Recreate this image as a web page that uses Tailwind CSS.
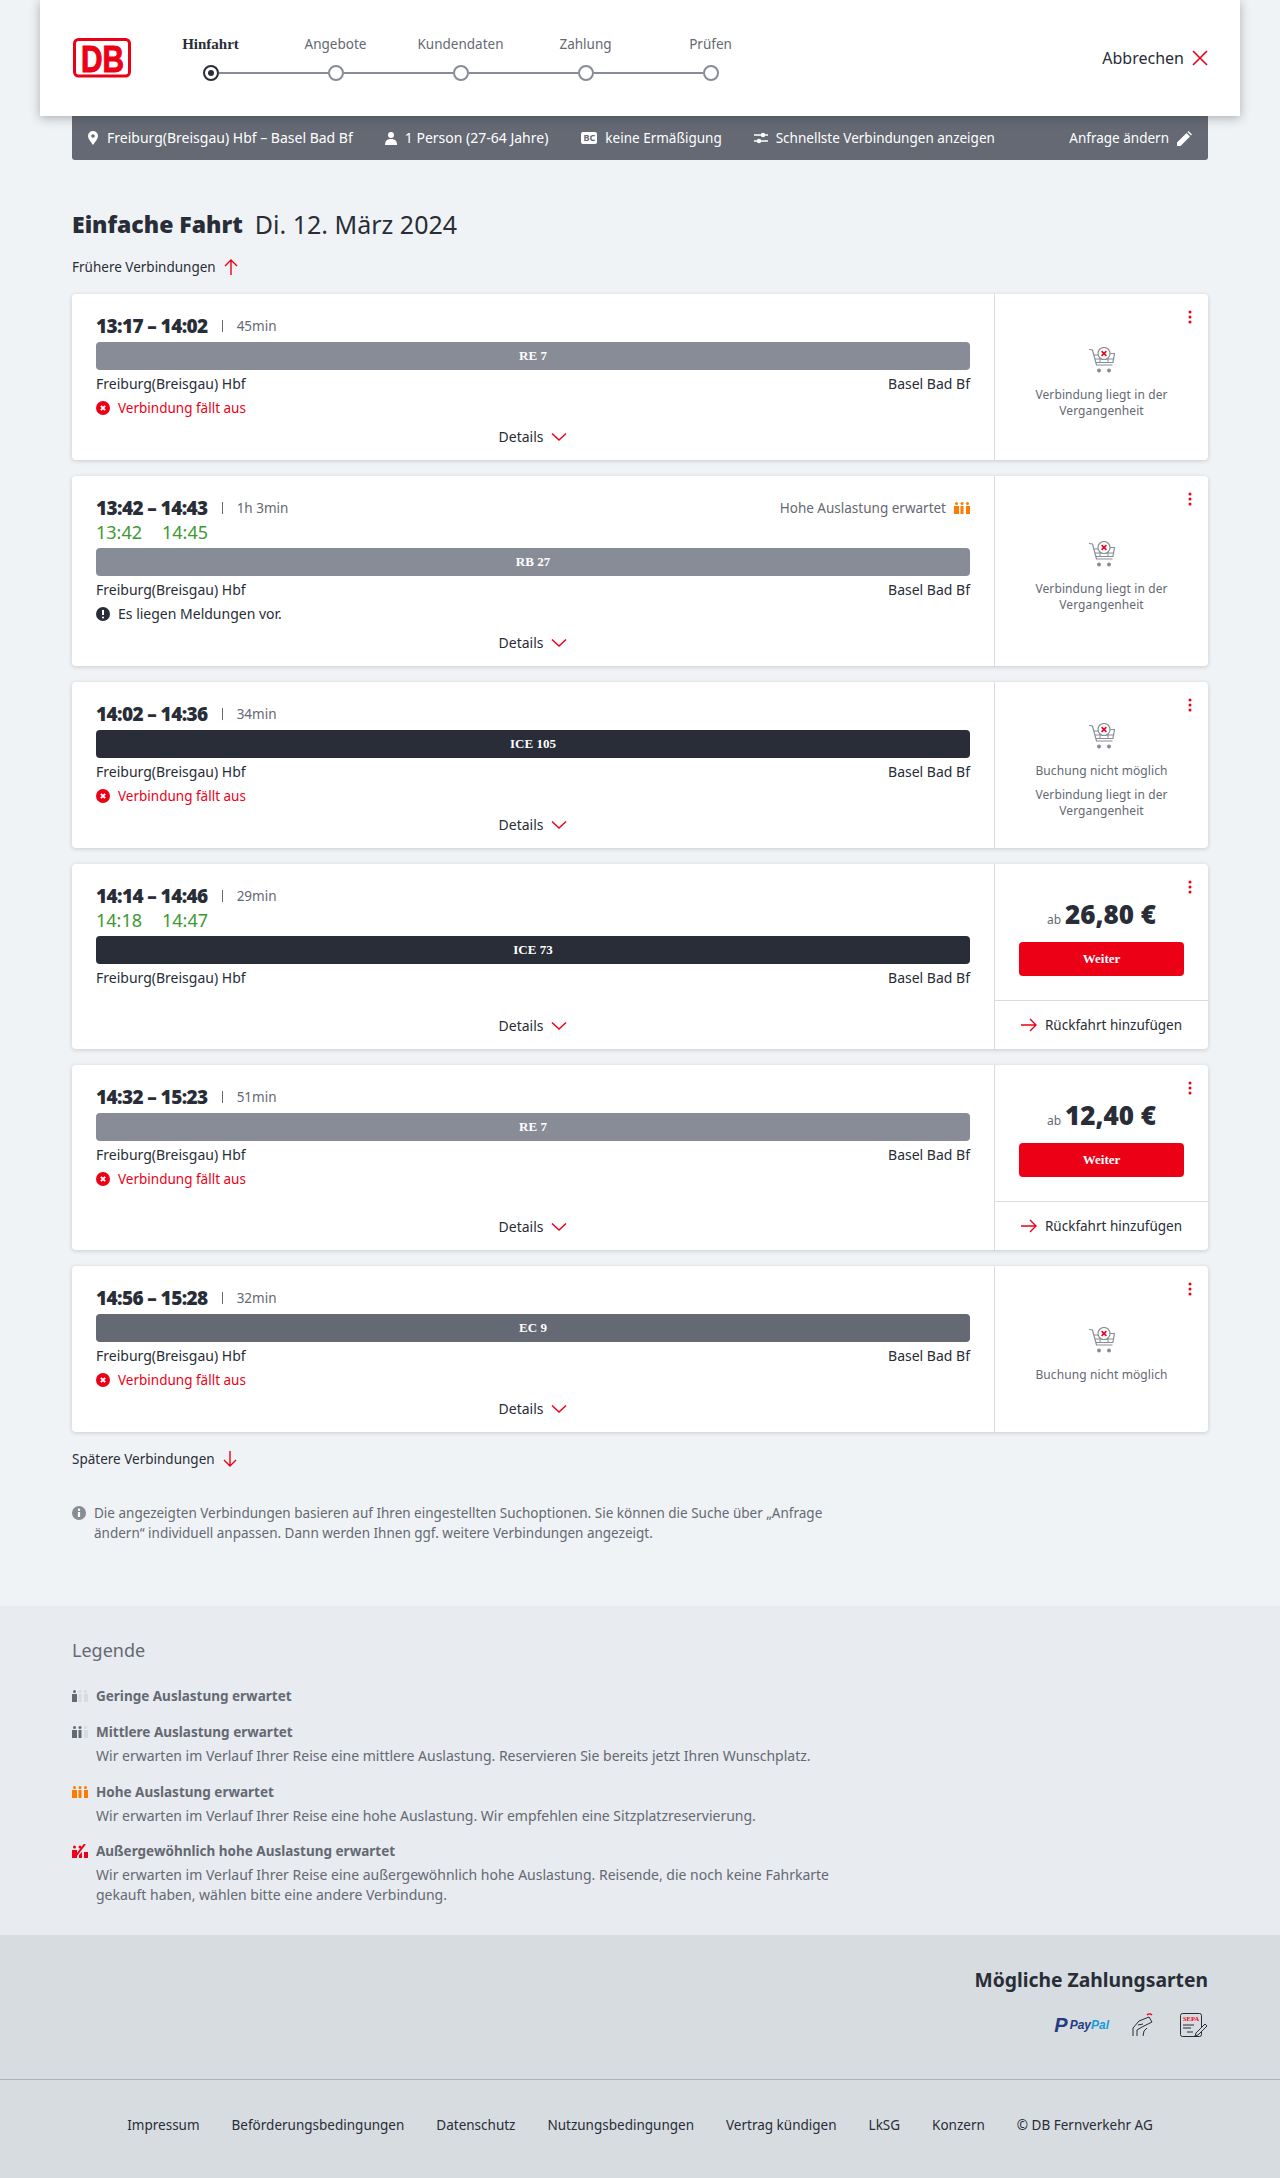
<!DOCTYPE html>
<html lang="de">
<head>
    <meta charset="UTF-8">
    <meta name="viewport" content="width=device-width, initial-scale=1.0">
    <title>Verbindungen</title>
    <script src="https://cdn.jsdelivr.net/npm/@tailwindcss/browser@4"></script>
</head>
<body class="bg-[#f0f3f5] font-['Noto_Sans',sans-serif] text-[#282d37] text-[14px] leading-5">

    <svg class="hidden" xmlns="http://www.w3.org/2000/svg">
        <symbol id="cart" viewBox="0 0 26 26">
            <path d="M0 2.500l3.500.5L7.500 18h16" fill="none" stroke="#878c96" stroke-width="1.200"/>
            <path d="M5 8h4M21 6.500h4.500l-1.600 9H7" fill="none" stroke="#878c96" stroke-width="1.200"/>
            <path d="M6 12h18M11 9v6M19 11v4" fill="none" stroke="#878c96" stroke-width="1"/>
            <circle cx="15" cy="6.500" r="6" fill="#fff" stroke="#878c96" stroke-width="1.200"/>
            <path d="M12.600 4.100l4.800 4.800M17.400 4.100l-4.800 4.800" stroke="#ec0016" stroke-width="1.500"/>
            <circle cx="10" cy="23.500" r="2" fill="#878c96"/>
            <circle cx="20" cy="23.500" r="2" fill="#878c96"/>
        </symbol>
        <symbol id="dots" viewBox="0 0 4 14">
            <circle cx="2" cy="2" r="1.500" fill="#ec0016"/>
            <circle cx="2" cy="7" r="1.500" fill="#ec0016"/>
            <circle cx="2" cy="12" r="1.500" fill="#ec0016"/>
        </symbol>
        <symbol id="chev" viewBox="0 0 16 10">
            <path d="M1 1.500l7 6.500 7-6.500" fill="none" stroke="#ec0016" stroke-width="1.500"/>
        </symbol>
        <symbol id="right" viewBox="0 0 16 14">
            <path d="M0 7h15M9 1l6 6-6 6" fill="none" stroke="#ec0016" stroke-width="1.400"/>
        </symbol>
        <symbol id="err" viewBox="0 0 14 14">
            <circle cx="7" cy="7" r="7" fill="#ec0016"/>
            <path d="M4.900 4.900l4.200 4.200M9.100 4.900l-4.200 4.200" stroke="#fff" stroke-width="2"/>
        </symbol>
    </svg>

    <header class="mx-10 h-[116px] bg-white shadow-[0_2px_10px_rgba(40,45,55,0.35)] relative z-10 flex items-center pl-[33px] pr-8">
        <svg class="w-[58px] h-10 shrink-0 overflow-visible" viewBox="0 0 58 40">
            <rect x="1.500" y="1.500" width="55" height="36.500" rx="4" fill="#fff" stroke="#ec0016" stroke-width="3"/>
            <text x="8" y="33.500" textLength="43" lengthAdjust="spacingAndGlyphs" font-family="Liberation Sans" font-weight="700" font-size="37" fill="#ec0016" stroke="#ec0016" stroke-width="1">DB</text>
        </svg>
        <div class="ml-[17px] w-[625px] -mt-px">
            <div class="grid grid-cols-5 text-center text-[13.500px] text-[#646973] h-5">
                <span class="font-['Liberation_Serif',serif] font-bold text-[15px] text-[#282d37]">Hinfahrt</span>
                <span>Angebote</span>
                <span>Kundendaten</span>
                <span>Zahlung</span>
                <span>Prüfen</span>
            </div>
            <div class="flex items-center mt-[11px] mx-[54.500px]">
                <span class="w-4 h-4 rounded-full border-2 border-[#282d37] flex items-center justify-center shrink-0"><span class="w-1.5 h-1.5 rounded-full bg-[#282d37]"></span></span>
                <span class="flex-1 h-0.5 bg-[#878c96]"></span>
                <span class="w-4 h-4 rounded-full border-2 border-[#878c96] shrink-0"></span>
                <span class="flex-1 h-0.5 bg-[#878c96]"></span>
                <span class="w-4 h-4 rounded-full border-2 border-[#878c96] shrink-0"></span>
                <span class="flex-1 h-0.5 bg-[#878c96]"></span>
                <span class="w-4 h-4 rounded-full border-2 border-[#878c96] shrink-0"></span>
                <span class="flex-1 h-0.5 bg-[#878c96]"></span>
                <span class="w-4 h-4 rounded-full border-2 border-[#878c96] shrink-0"></span>
            </div>
        </div>
        <div class="ml-auto flex items-center gap-2 text-[16px]">
            <span>Abbrechen</span>
            <svg class="w-4 h-4" viewBox="0 0 16 16"><path d="M1 1l14 14M15 1L1 15" stroke="#ec0016" stroke-width="1.600"/></svg>
        </div>
    </header>

    <div class="mx-[72px] h-11 bg-[#646973] rounded-b-[3px] text-white flex items-center pl-4 pr-4 text-[13.500px]">
        <svg class="w-[10px] h-[14px] mr-[9px]" viewBox="0 0 10 14"><path fill-rule="evenodd" d="M5 0a5 5 0 0 1 5 5c0 3-3 6-5 9-2-3-5-6-5-9a5 5 0 0 1 5-5zm0 3.200a1.800 1.800 0 1 0 0 3.600 1.800 1.800 0 0 0 0-3.600z" fill="#fff"/></svg>
        <span class="text-[14px]">Freiburg(Breisgau) Hbf – Basel Bad Bf</span>
        <svg class="w-3 h-[13px] ml-8 mr-2" viewBox="0 0 12 13"><circle cx="6" cy="3" r="3" fill="#fff"/><path d="M0 13c0-4 2-6 6-6s6 2 6 6z" fill="#fff"/></svg>
        <span class="text-[14px]">1 Person (27-64 Jahre)</span>
        <span class="ml-[33px] mr-2 w-4 h-3 rounded-[2px] bg-white text-[#646973] text-[9px] leading-3 font-bold text-center">BC</span>
        <span>keine Ermäßigung</span>
        <svg class="w-[14px] h-3 ml-8 mr-2" viewBox="0 0 14 12"><path d="M0 3h14M0 9h14" stroke="#fff" stroke-width="1.600"/><circle cx="9" cy="3" r="2.200" fill="#fff"/><circle cx="5" cy="9" r="2.200" fill="#fff"/></svg>
        <span>Schnellste Verbindungen anzeigen</span>
        <span class="ml-auto">Anfrage ändern</span>
        <svg class="w-[15px] h-[15px] ml-2" viewBox="0 0 15 15"><path d="M0 15v-3.500L9.500 2 13 5.500 3.500 15zM10.500 1l1-1L15 3.500l-1 1z" fill="#fff"/></svg>
    </div>

    <main class="mx-[72px]">
        <h1 class="mt-12 h-8 flex items-center gap-3">
            <span class="font-black text-[23px]">Einfache Fahrt</span>
            <span class="font-normal text-[25px]">Di. 12. März 2024</span>
        </h1>
        <div class="mt-[15px] h-6 flex items-center gap-2 text-[13.500px]">
            Frühere Verbindungen
            <svg class="w-[14px] h-4" viewBox="0 0 14 16"><path d="M7 16V1M1 7l6-6 6 6" fill="none" stroke="#ec0016" stroke-width="1.400"/></svg>
        </div>

        <div class="mt-[15px] flex flex-col gap-4">

            <!-- 13:17 -->
            <article class="bg-white rounded-[4px] shadow-[0_1px_4px_rgba(40,45,55,0.2)] flex">
                <div class="flex-1 min-w-0 flex flex-col pl-6 pr-6 pt-5 pb-3">
                    <div class="h-6 flex items-center">
                        <span class="font-black text-[19px] tracking-[-0.6px]">13:17 – 14:02</span>
                        <span class="mx-3.5 w-px h-3 bg-[#646973]"></span>
                        <span class="text-[13.500px] text-[#646973]">45min</span>
                    </div>
                    <div class="mt-1 h-7 rounded-[4px] bg-[#878c96] text-white flex items-center justify-center font-bold text-[13px] font-['Liberation_Serif',serif]">RE 7</div>
                    <div class="h-[26px] pt-px flex items-center justify-between"><span>Freiburg(Breisgau) Hbf</span><span>Basel Bad Bf</span></div>
                    <div class="h-6 flex items-center gap-2 text-[13.500px] text-[#ec0016]"><svg class="w-[14px] h-[14px]"><use href="#err"/></svg>Verbindung fällt aus</div>
                    <div class="mt-auto pt-1.5 h-7 flex items-center justify-center gap-2">Details <svg class="w-4 h-[10px]"><use href="#chev"/></svg></div>
                </div>
                <div class="relative w-[214px] shrink-0 border-l border-[#d7dce1] flex flex-col items-center justify-center pt-3 text-[12px] tracking-[0.1px] leading-4 text-[#646973] text-center">
                    <svg class="absolute right-[16px] top-4 w-1 h-[14px]"><use href="#dots"/></svg>
                    <svg class="w-[26px] h-[26px] mb-[14px]"><use href="#cart"/></svg>
                    <p class="w-[150px]">Verbindung liegt in der Vergangenheit</p>
                </div>
            </article>

            <!-- 13:42 -->
            <article class="bg-white rounded-[4px] shadow-[0_1px_4px_rgba(40,45,55,0.2)] flex">
                <div class="flex-1 min-w-0 flex flex-col pl-6 pr-6 pt-5 pb-3">
                    <div class="h-6 flex items-center">
                        <span class="font-black text-[19px] tracking-[-0.6px]">13:42 – 14:43</span>
                        <span class="mx-3.5 w-px h-3 bg-[#646973]"></span>
                        <span class="text-[13.500px] text-[#646973]">1h 3min</span>
                        <span class="ml-auto text-[13.500px] text-[#646973]">Hohe Auslastung erwartet</span>
                        <svg class="ml-2 w-4 h-3" viewBox="0 0 16 12"><g fill="#ff7a00"><circle cx="2.500" cy="1.500" r="1.500"/><circle cx="8" cy="1.500" r="1.500"/><circle cx="13.500" cy="1.500" r="1.500"/><rect x="0" y="4" width="5" height="8"/><rect x="6.500" y="4" width="3" height="8"/><rect x="12" y="4" width="4" height="8"/></g></svg>
                    </div>
                    <div class="h-6 flex items-center gap-5 text-[18px] text-[#3d9a33]"><span>13:42</span><span>14:45</span></div>
                    <div class="mt-1 h-7 rounded-[4px] bg-[#878c96] text-white flex items-center justify-center font-bold text-[13px] font-['Liberation_Serif',serif]">RB 27</div>
                    <div class="h-[26px] pt-px flex items-center justify-between"><span>Freiburg(Breisgau) Hbf</span><span>Basel Bad Bf</span></div>
                    <div class="h-6 flex items-center gap-2"><svg class="w-[14px] h-[14px]" viewBox="0 0 14 14"><circle cx="7" cy="7" r="7" fill="#282d37"/><path d="M7 3v5" stroke="#fff" stroke-width="2"/><circle cx="7" cy="10.500" r="1.100" fill="#fff"/></svg>Es liegen Meldungen vor.</div>
                    <div class="mt-auto pt-1.5 h-7 flex items-center justify-center gap-2">Details <svg class="w-4 h-[10px]"><use href="#chev"/></svg></div>
                </div>
                <div class="relative w-[214px] shrink-0 border-l border-[#d7dce1] flex flex-col items-center justify-center pt-3 text-[12px] tracking-[0.1px] leading-4 text-[#646973] text-center">
                    <svg class="absolute right-[16px] top-4 w-1 h-[14px]"><use href="#dots"/></svg>
                    <svg class="w-[26px] h-[26px] mb-[14px]"><use href="#cart"/></svg>
                    <p class="w-[150px]">Verbindung liegt in der Vergangenheit</p>
                </div>
            </article>

            <!-- 14:02 -->
            <article class="bg-white rounded-[4px] shadow-[0_1px_4px_rgba(40,45,55,0.2)] flex">
                <div class="flex-1 min-w-0 flex flex-col pl-6 pr-6 pt-5 pb-3">
                    <div class="h-6 flex items-center">
                        <span class="font-black text-[19px] tracking-[-0.6px]">14:02 – 14:36</span>
                        <span class="mx-3.5 w-px h-3 bg-[#646973]"></span>
                        <span class="text-[13.500px] text-[#646973]">34min</span>
                    </div>
                    <div class="mt-1 h-7 rounded-[4px] bg-[#282d37] text-white flex items-center justify-center font-bold text-[13px] font-['Liberation_Serif',serif]">ICE 105</div>
                    <div class="h-[26px] pt-px flex items-center justify-between"><span>Freiburg(Breisgau) Hbf</span><span>Basel Bad Bf</span></div>
                    <div class="h-6 flex items-center gap-2 text-[13.500px] text-[#ec0016]"><svg class="w-[14px] h-[14px]"><use href="#err"/></svg>Verbindung fällt aus</div>
                    <div class="mt-auto pt-1.5 h-7 flex items-center justify-center gap-2">Details <svg class="w-4 h-[10px]"><use href="#chev"/></svg></div>
                </div>
                <div class="relative w-[214px] shrink-0 border-l border-[#d7dce1] flex flex-col items-center justify-center pt-3 text-[12px] tracking-[0.1px] leading-4 text-[#646973] text-center">
                    <svg class="absolute right-[16px] top-4 w-1 h-[14px]"><use href="#dots"/></svg>
                    <svg class="w-[26px] h-[26px] mb-[14px]"><use href="#cart"/></svg>
                    <p>Buchung nicht möglich</p>
                    <p class="w-[150px] mt-2">Verbindung liegt in der Vergangenheit</p>
                </div>
            </article>

            <!-- 14:14 -->
            <article class="bg-white rounded-[4px] shadow-[0_1px_4px_rgba(40,45,55,0.2)] flex">
                <div class="flex-1 min-w-0 flex flex-col pl-6 pr-6 pt-5 pb-3">
                    <div class="h-6 flex items-center">
                        <span class="font-black text-[19px] tracking-[-0.6px]">14:14 – 14:46</span>
                        <span class="mx-3.5 w-px h-3 bg-[#646973]"></span>
                        <span class="text-[13.500px] text-[#646973]">29min</span>
                    </div>
                    <div class="h-6 flex items-center gap-5 text-[18px] text-[#3d9a33]"><span>14:18</span><span>14:47</span></div>
                    <div class="mt-1 h-7 rounded-[4px] bg-[#282d37] text-white flex items-center justify-center font-bold text-[13px] font-['Liberation_Serif',serif]">ICE 73</div>
                    <div class="h-[26px] pt-px flex items-center justify-between"><span>Freiburg(Breisgau) Hbf</span><span>Basel Bad Bf</span></div>
                    <div class="mt-auto pt-1.5 h-7 flex items-center justify-center gap-2">Details <svg class="w-4 h-[10px]"><use href="#chev"/></svg></div>
                </div>
                <div class="relative w-[214px] shrink-0 border-l border-[#d7dce1] flex flex-col">
                    <svg class="absolute right-[16px] top-4 w-1 h-[14px]"><use href="#dots"/></svg>
                    <div class="h-[136px] pt-8 px-6 flex flex-col items-center">
                        <div class="h-9 flex items-baseline gap-1"><span class="text-[12px] text-[#646973]">ab</span><span class="font-black text-[26px] leading-9">26,80 €</span></div>
                        <div class="mt-2.5 w-full h-[34px] rounded-[4px] bg-[#ec0016] text-white flex items-center justify-center font-bold text-[13px] font-['Liberation_Serif',serif]">Weiter</div>
                    </div>
                    <div class="h-[49px] border-t border-[#d7dce1] flex items-center justify-center gap-2 text-[13.500px]"><svg class="w-4 h-[14px]"><use href="#right"/></svg>Rückfahrt hinzufügen</div>
                </div>
            </article>

            <!-- 14:32 -->
            <article class="bg-white rounded-[4px] shadow-[0_1px_4px_rgba(40,45,55,0.2)] flex">
                <div class="flex-1 min-w-0 flex flex-col pl-6 pr-6 pt-5 pb-3">
                    <div class="h-6 flex items-center">
                        <span class="font-black text-[19px] tracking-[-0.6px]">14:32 – 15:23</span>
                        <span class="mx-3.5 w-px h-3 bg-[#646973]"></span>
                        <span class="text-[13.500px] text-[#646973]">51min</span>
                    </div>
                    <div class="mt-1 h-7 rounded-[4px] bg-[#878c96] text-white flex items-center justify-center font-bold text-[13px] font-['Liberation_Serif',serif]">RE 7</div>
                    <div class="h-[26px] pt-px flex items-center justify-between"><span>Freiburg(Breisgau) Hbf</span><span>Basel Bad Bf</span></div>
                    <div class="h-6 flex items-center gap-2 text-[13.500px] text-[#ec0016]"><svg class="w-[14px] h-[14px]"><use href="#err"/></svg>Verbindung fällt aus</div>
                    <div class="mt-auto pt-1.5 h-7 flex items-center justify-center gap-2">Details <svg class="w-4 h-[10px]"><use href="#chev"/></svg></div>
                </div>
                <div class="relative w-[214px] shrink-0 border-l border-[#d7dce1] flex flex-col">
                    <svg class="absolute right-[16px] top-4 w-1 h-[14px]"><use href="#dots"/></svg>
                    <div class="h-[136px] pt-8 px-6 flex flex-col items-center">
                        <div class="h-9 flex items-baseline gap-1"><span class="text-[12px] text-[#646973]">ab</span><span class="font-black text-[26px] leading-9">12,40 €</span></div>
                        <div class="mt-2.5 w-full h-[34px] rounded-[4px] bg-[#ec0016] text-white flex items-center justify-center font-bold text-[13px] font-['Liberation_Serif',serif]">Weiter</div>
                    </div>
                    <div class="h-[49px] border-t border-[#d7dce1] flex items-center justify-center gap-2 text-[13.500px]"><svg class="w-4 h-[14px]"><use href="#right"/></svg>Rückfahrt hinzufügen</div>
                </div>
            </article>

            <!-- 14:56 -->
            <article class="bg-white rounded-[4px] shadow-[0_1px_4px_rgba(40,45,55,0.2)] flex">
                <div class="flex-1 min-w-0 flex flex-col pl-6 pr-6 pt-5 pb-3">
                    <div class="h-6 flex items-center">
                        <span class="font-black text-[19px] tracking-[-0.6px]">14:56 – 15:28</span>
                        <span class="mx-3.5 w-px h-3 bg-[#646973]"></span>
                        <span class="text-[13.500px] text-[#646973]">32min</span>
                    </div>
                    <div class="mt-1 h-7 rounded-[4px] bg-[#646973] text-white flex items-center justify-center font-bold text-[13px] font-['Liberation_Serif',serif]">EC 9</div>
                    <div class="h-[26px] pt-px flex items-center justify-between"><span>Freiburg(Breisgau) Hbf</span><span>Basel Bad Bf</span></div>
                    <div class="h-6 flex items-center gap-2 text-[13.500px] text-[#ec0016]"><svg class="w-[14px] h-[14px]"><use href="#err"/></svg>Verbindung fällt aus</div>
                    <div class="mt-auto pt-1.5 h-7 flex items-center justify-center gap-2">Details <svg class="w-4 h-[10px]"><use href="#chev"/></svg></div>
                </div>
                <div class="relative w-[214px] shrink-0 border-l border-[#d7dce1] flex flex-col items-center justify-center pt-3 text-[12px] tracking-[0.1px] leading-4 text-[#646973] text-center">
                    <svg class="absolute right-[16px] top-4 w-1 h-[14px]"><use href="#dots"/></svg>
                    <svg class="w-[26px] h-[26px] mb-[14px]"><use href="#cart"/></svg>
                    <p>Buchung nicht möglich</p>
                </div>
            </article>
        </div>

        <div class="mt-[15px] h-6 flex items-center gap-2 text-[13.500px]">
            Spätere Verbindungen
            <svg class="w-[14px] h-4" viewBox="0 0 14 16"><path d="M7 0v15M1 9l6 6 6-6" fill="none" stroke="#ec0016" stroke-width="1.400"/></svg>
        </div>

        <div class="mt-8 flex gap-2 text-[13.500px] text-[#646973] w-[770px]">
            <svg class="w-[14px] h-[14px] mt-[3px] shrink-0" viewBox="0 0 14 14"><circle cx="7" cy="7" r="7" fill="#878c96"/><circle cx="7" cy="3.700" r="1.200" fill="#fff"/><path d="M7 6v5" stroke="#fff" stroke-width="2.200"/></svg>
            <p>Die angezeigten Verbindungen basieren auf Ihren eingestellten Suchoptionen. Sie können die Suche über „Anfrage ändern“ individuell anpassen. Dann werden Ihnen ggf. weitere Verbindungen angezeigt.</p>
        </div>
    </main>

    <section class="mt-[63px] h-[329px] bg-[#e8ebef] px-[72px] pt-8 text-[#646973]">
        <h2 class="h-6 flex items-center text-[18px] font-normal">Legende</h2>
        <div class="mt-6 flex items-center gap-2 h-5 font-bold text-[13.500px]">
            <svg class="w-4 h-3" viewBox="0 0 16 12"><circle cx="2.500" cy="1.500" r="1.500" fill="#646973"/><circle cx="8" cy="1.500" r="1.500" fill="#d7dce1"/><circle cx="13.500" cy="1.500" r="1.500" fill="#d7dce1"/><rect y="4" width="5" height="8" fill="#646973"/><rect x="6.500" y="4" width="3" height="8" fill="#d7dce1"/><rect x="12" y="4" width="4" height="8" fill="#d7dce1"/></svg>
            Geringe Auslastung erwartet
        </div>
        <div class="mt-4 flex items-center gap-2 h-5 font-bold text-[13.500px]">
            <svg class="w-4 h-3" viewBox="0 0 16 12"><circle cx="2.500" cy="1.500" r="1.500" fill="#646973"/><circle cx="8" cy="1.500" r="1.500" fill="#646973"/><circle cx="13.500" cy="1.500" r="1.500" fill="#d7dce1"/><rect y="4" width="5" height="8" fill="#646973"/><rect x="6.500" y="4" width="3" height="8" fill="#646973"/><rect x="12" y="4" width="4" height="8" fill="#d7dce1"/></svg>
            Mittlere Auslastung erwartet
        </div>
        <p class="mt-1 ml-6 w-[740px]">Wir erwarten im Verlauf Ihrer Reise eine mittlere Auslastung. Reservieren Sie bereits jetzt Ihren Wunschplatz.</p>
        <div class="mt-4 flex items-center gap-2 h-5 font-bold text-[13.500px]">
            <svg class="w-4 h-3" viewBox="0 0 16 12"><g fill="#ff7a00"><circle cx="2.500" cy="1.500" r="1.500"/><circle cx="8" cy="1.500" r="1.500"/><circle cx="13.500" cy="1.500" r="1.500"/><rect y="4" width="5" height="8"/><rect x="6.500" y="4" width="3" height="8"/><rect x="12" y="4" width="4" height="8"/></g></svg>
            Hohe Auslastung erwartet
        </div>
        <p class="mt-1 ml-6 w-[740px]">Wir erwarten im Verlauf Ihrer Reise eine hohe Auslastung. Wir empfehlen eine Sitzplatzreservierung.</p>
        <div class="mt-[15px] flex items-center gap-2 h-5 font-bold text-[13.500px]">
            <svg class="w-4 h-[14px]" viewBox="0 0 16 14"><g fill="#ec0016"><circle cx="2.500" cy="3" r="1.500"/><circle cx="8" cy="3" r="1.500"/><path d="M0 6h5v8H0zM7 11l3-3v6H7zM12 8h4v6h-4z"/></g><path d="M3 13L13 0" stroke="#ec0016" stroke-width="2"/></svg>
            Außergewöhnlich hohe Auslastung erwartet
        </div>
        <p class="mt-1 ml-6 w-[740px]">Wir erwarten im Verlauf Ihrer Reise eine außergewöhnlich hohe Auslastung. Reisende, die noch keine Fahrkarte gekauft haben, wählen bitte eine andere Verbindung.</p>
    </section>

    <footer class="bg-[#d7dce1] h-[243px]">
        <div class="h-[145px] border-b border-[#afb4bb] px-[72px] pt-[31px] flex flex-col items-end">
            <h2 class="h-7 flex items-center text-[19.300px] font-bold">Mögliche Zahlungsarten</h2>
            <div class="mt-[19px] h-6 flex items-center">
                <span class="flex items-center gap-[2px] italic font-bold font-['Liberation_Sans',sans-serif] text-[#253b80]">
                    <span class="text-[20px] leading-6">P</span>
                    <span class="text-[12px]">Pay<span class="text-[#179bd7]">Pal</span></span>
                </span>
                <svg class="ml-[23px] w-[22px] h-[24px]" viewBox="0 0 22 24" fill="none" stroke="#282d37" stroke-width="1"><path d="M1 23v-8l6-7 10-4 3 5-10 5M6 12l5-1M5 23v-6l5-3M11 23l1-5 3-3"/><path d="M15 2c1.500-1.500 3.500-1.500 5 0" stroke="#ec0016" stroke-width="1.500"/></svg>
                <svg class="ml-[26px] w-[28px] h-[24px]" viewBox="0 0 28 24"><rect x=".5" y=".5" width="21" height="23" rx="2" fill="none" stroke="#282d37"/><text x="3" y="8" font-family="Liberation Serif" font-weight="700" font-size="6.500" fill="#ec0016">SEPA</text><path d="M3 12h11M3 15h8M7 19h6" stroke="#282d37"/><path d="M16 20l9-9 2 2-9 9-3 1z" fill="#d7dce1" stroke="#282d37"/></svg>
            </div>
        </div>
        <nav class="mt-[35px] h-5 flex justify-center gap-8 text-[13.500px]">
            <span>Impressum</span>
            <span>Beförderungsbedingungen</span>
            <span>Datenschutz</span>
            <span>Nutzungsbedingungen</span>
            <span>Vertrag kündigen</span>
            <span>LkSG</span>
            <span>Konzern</span>
            <span>© DB Fernverkehr AG</span>
        </nav>
    </footer>
</body>
</html>
